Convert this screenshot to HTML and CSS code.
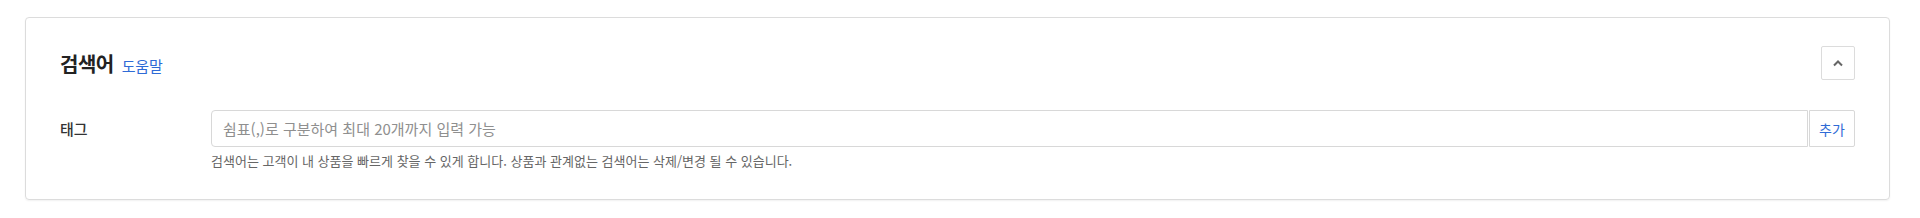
FILE: index.html
```html
<!DOCTYPE html>
<html lang="ko">
<head>
    <meta charset="UTF-8">
    <meta name="viewport" content="width=device-width, initial-scale=1.0">
    <title>검색어</title>
    <link rel="stylesheet" href="styles.css">
</head>
<body>
    <div class="panel">
        <div class="panel-header">
            <div class="panel-title">
                <h2>검색어</h2>
                <a class="help-link" href="#">도움말</a>
            </div>
            <button class="toggle-btn" type="button" aria-label="접기">
                <svg width="12" height="8" viewBox="0 0 12 8">
                    <path d="M2 6.5 L6 2.5 L10 6.5" fill="none" stroke="#666" stroke-width="2"/>
                </svg>
            </button>
        </div>
        <div class="form-row">
            <label class="form-label" for="tagInput">태그</label>
            <div class="form-field">
                <div class="input-group">
                    <input type="text" id="tagInput" placeholder="쉼표(,)로 구분하여 최대 20개까지 입력 가능">
                    <button class="add-btn" type="button">추가</button>
                </div>
                <p class="hint">검색어는 고객이 내 상품을 빠르게 찾을 수 있게 합니다. 상품과 관계없는 검색어는 삭제/변경 될 수 있습니다.</p>
            </div>
        </div>
    </div>
</body>
</html>
```

FILE: styles.css
```css
body {
    margin: 0;
    padding: 17px 30px 17px 25px;
    background: #fff;
    color: #222;
    font-family: 'Noto Sans CJK KR', 'Noto Sans', sans-serif;
}

.panel {
    border: 1px solid #dcdcdc;
    border-radius: 4px;
    box-shadow: 0 1px 2px rgba(0, 0, 0, 0.06);
    padding: 28px 34px 29px 34px;
}

.panel-header {
    display: flex;
    justify-content: space-between;
    align-items: center;
    height: 34px;
}

.panel-title {
    display: flex;
    align-items: baseline;
    gap: 8px;
}

.panel-title h2 {
    margin: 0;
    font-size: 20px;
    font-weight: 700;
    letter-spacing: -0.5px;
    color: #222;
}

.help-link {
    font-size: 15px;
    color: #2f6bd6;
    text-decoration: none;
    letter-spacing: -0.2px;
}

.toggle-btn {
    width: 34px;
    height: 34px;
    padding: 0;
    border: 1px solid #dcdcdc;
    border-radius: 2px;
    background: #fff;
    display: flex;
    align-items: center;
    justify-content: center;
    cursor: pointer;
}

.form-row {
    display: flex;
    margin-top: 30px;
}

.form-label {
    width: 151px;
    flex-shrink: 0;
    height: 37px;
    line-height: 37px;
    font-size: 15px;
    font-weight: 500;
    color: #333;
}

.form-field {
    flex: 1;
}

.input-group {
    display: flex;
    height: 37px;
}

.input-group input {
    flex: 1;
    height: 37px;
    box-sizing: border-box;
    border: 1px solid #d8d8d8;
    border-radius: 4px 0 0 4px;
    padding: 0 11px;
    font-family: inherit;
    font-size: 15px;
    color: #222;
    outline: none;
}

.input-group input::placeholder {
    color: #8f8f8f;
}

.add-btn {
    width: 46px;
    height: 37px;
    margin-left: 1px;
    border: 1px solid #d8d8d8;
    border-radius: 0 2px 2px 0;
    background: #fff;
    color: #2f6bd6;
    font-family: inherit;
    font-size: 14px;
    padding: 0;
    cursor: pointer;
}

.hint {
    margin: 4px 0 0 0;
    font-size: 13px;
    line-height: 19px;
    color: #666;
}
```
